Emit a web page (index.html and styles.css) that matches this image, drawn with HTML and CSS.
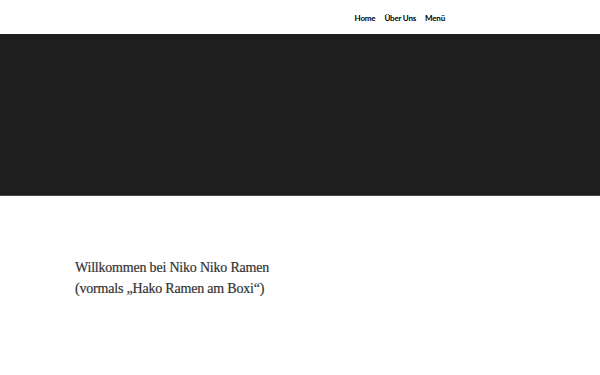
FILE: index.html
```html
<!DOCTYPE html>
<html lang="de">
<head>
    <meta charset="UTF-8">
    <meta name="viewport" content="width=device-width, initial-scale=1.0">
    <title>Niko Niko Ramen</title>
    <link rel="stylesheet" href="styles.css">
</head>
<body>

    <header id="header">
        <nav class="main-nav">
            <a href="#">Home</a>
            <a href="#">Über Uns</a>
            <a href="#">Menü</a>
        </nav>
    </header>

    <div class="hero"></div>

    <section class="intro">
        <h1>Willkommen bei Niko Niko Ramen<br>(vormals „Hako Ramen am Boxi“)</h1>
    </section>

</body>
</html>
```

FILE: styles.css
```css
body {
    margin: 0;
    font-family: "Open Sans", Arial, sans-serif;
    background-color: #fff;
    color: #333;
}
#header {
    height: 34px;
    display: flex;
    justify-content: flex-end;
    align-items: center;
    padding-right: 155px;
}
.main-nav {
    display: flex;
    gap: 9px;
    padding-top: 2px;
}
.main-nav a {
    font-family: Lato, sans-serif;
    font-weight: 700;
    font-size: 8px;
    letter-spacing: -0.2px;
    color: #000;
    text-decoration: none;
}
.hero {
    height: 161px;
    background-color: #1e1e1e;
    border-bottom: 1px solid #444;
}
.intro {
    padding: 61px 75px;
}
.intro h1 {
    margin: 0;
    font-family: "Liberation Serif", serif;
    font-weight: 400;
    font-size: 14px;
    line-height: 21px;
    letter-spacing: -0.2px;
    color: #333;
    -webkit-text-stroke: 0.2px #333;
}
```
